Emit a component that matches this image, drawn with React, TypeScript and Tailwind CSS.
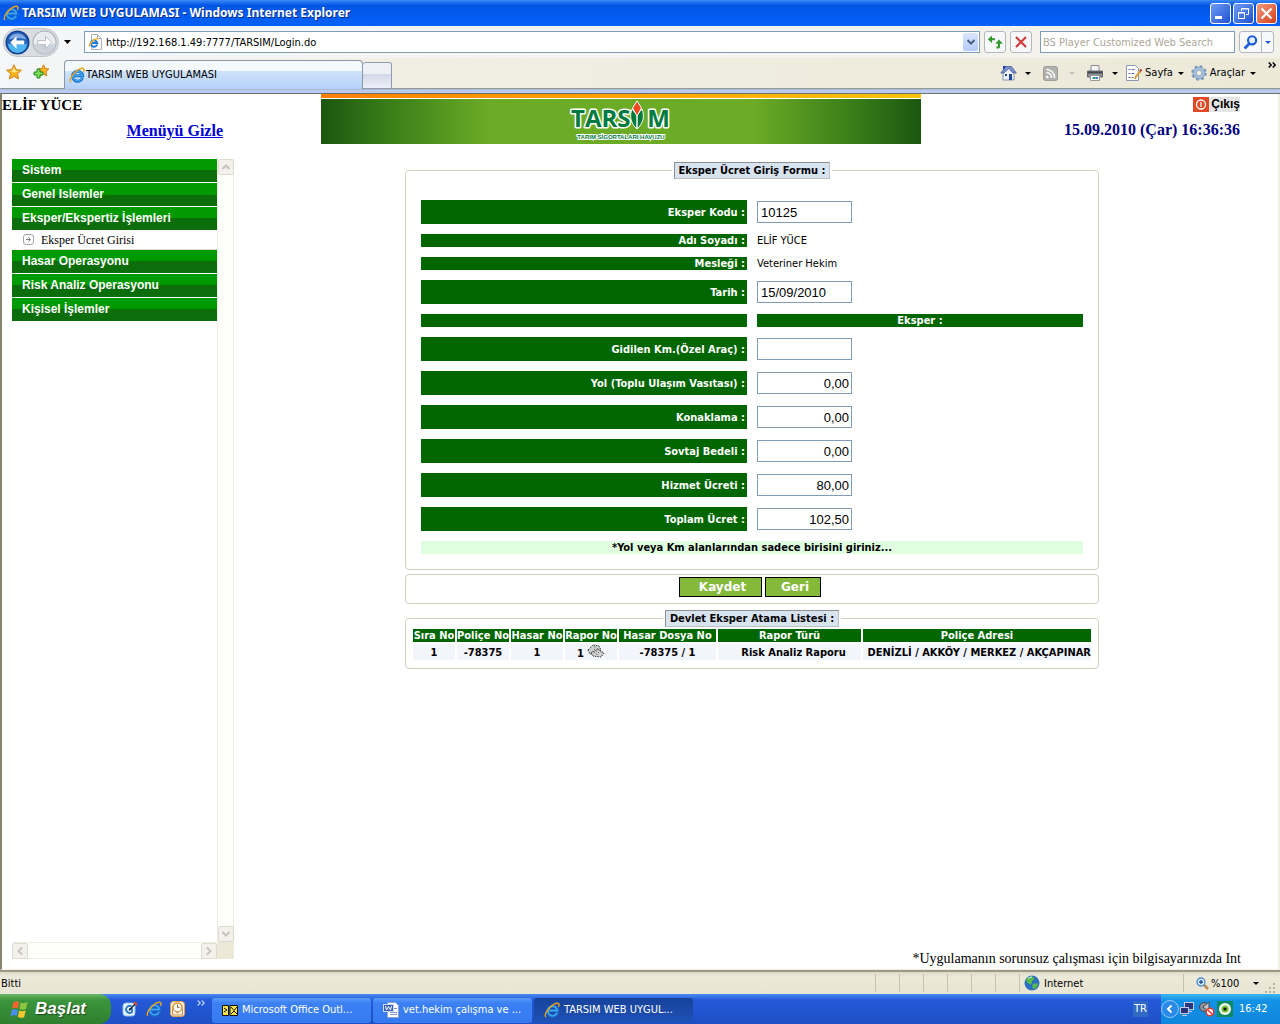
import type { ReactNode } from "react";

const menuBefore = ["Sistem", "Genel Islemler", "Eksper/Ekspertiz İşlemleri"];
const menuAfter = ["Hasar Operasyonu", "Risk Analiz Operasyonu", "Kişisel İşlemler"];

const fees = [
  { id: "km", label: "Gidilen Km.(Özel Araç) :", value: "" },
  { id: "yol", label: "Yol (Toplu Ulaşım Vasıtası) :", value: "0,00" },
  { id: "konaklama", label: "Konaklama :", value: "0,00" },
  { id: "sovtaj", label: "Sovtaj Bedeli :", value: "0,00" },
  { id: "hizmet", label: "Hizmet Ücreti :", value: "80,00" },
  { id: "toplam", label: "Toplam Ücret :", value: "102,50" },
];

function IeIcon({ className }: { className: string }) {
  return (
    <svg className={className} viewBox="0 0 16 16" fill="none">
      <path d="M13.400 10.800A5 5 0 1 1 13.600 8.700H5" stroke="#1c6fc9" strokeWidth="3" />
      <path d="M13 10.800A4.700 4.700 0 1 1 13.300 8.600H5" stroke="#3fa9f5" strokeWidth="1.500" />
      <path
        d="M2 15C-.5 13 4 6 9 2.800c3-1.800 5.500-2 6-.5.2.9-.1 1.700-.6 2.500"
        stroke="#e9a31f"
        strokeWidth="1.400"
      />
    </svg>
  );
}

function Caret({ color = "text-black" }: { color?: string }) {
  return (
    <svg className={`w-[6px] h-[3px] shrink-0 ${color}`} viewBox="0 0 6 3" fill="currentColor">
      <path d="M0 0h6L3 3z" />
    </svg>
  );
}

function Chevron({ className }: { className: string }) {
  return (
    <svg className={className} viewBox="0 0 8 8" fill="none" stroke="currentColor" strokeWidth="2">
      <path d="M0.500 6L4 2.500 7.500 6" />
    </svg>
  );
}

function TitleBar() {
  return (
    <header className="h-[26px] flex items-center pl-[3px] pr-[3px] bg-linear-to-b from-[#3b8af8] via-[#0254e3] via-20% to-[#0462fb]">
      <IeIcon className="w-4 h-4" />
      <h1 className="ml-[3px] flex-1 font-['Noto_Sans'] text-[12px] leading-5 font-bold text-white text-shadow-[1px_1px_0_#0a2d86]">
        TARSIM WEB UYGULAMASI - Windows Internet Explorer
      </h1>
      <div className="flex gap-[2px]">
        <button
          aria-label="Simge durumuna küçült"
          className="w-[21px] h-[21px] rounded-[3px] border border-white bg-linear-to-br from-[#6f9bf5] to-[#1f50cf]"
        >
          <svg className="w-full h-full" viewBox="0 0 19 19">
            <path d="M4 12h7v3H4z" fill="#fff" />
          </svg>
        </button>
        <button
          aria-label="Geri yükle"
          className="w-[21px] h-[21px] rounded-[3px] border border-white bg-linear-to-br from-[#6f9bf5] to-[#1f50cf]"
        >
          <svg className="w-full h-full" viewBox="0 0 19 19" fill="none" stroke="#fff">
            <path d="M7.500 7V4.500h7v6H12M7 5h8" />
            <path d="M4.500 8.500h6v6h-6zM4 9h7" />
          </svg>
        </button>
        <button
          aria-label="Kapat"
          className="w-[21px] h-[21px] rounded-[3px] border border-white bg-linear-to-br from-[#f09a7c] to-[#d53a10]"
        >
          <svg className="w-full h-full" viewBox="0 0 19 19" stroke="#fff" strokeWidth="2.200">
            <path d="M4.500 4.500l10 10M14.500 4.500l-10 10" />
          </svg>
        </button>
      </div>
    </header>
  );
}

function AddressBar() {
  return (
    <div className="h-8 flex items-center pl-[3px] pr-[6px] bg-linear-to-r from-[#f4f6f8] to-[#f3f2e9]">
      <div className="flex gap-[2px] rounded-full border border-[#c3c5c9] bg-[#d9dce0] p-px">
        <button aria-label="Geri">
          <svg className="w-[25px] h-[25px]" viewBox="0 0 26 26">
            <circle cx="13" cy="13" r="12.500" fill="#17408f" />
            <circle cx="13" cy="13" r="11" fill="#2463bd" />
            <path d="M3 14a10 10 0 0 0 20 0c-5 2-14 2-20 0z" fill="#4fb4f2" />
            <path d="M4 10a9.500 9.500 0 0 1 18 0c-5-2-13-2-18 0z" fill="#7fa9e0" />
            <path d="M12 6.500L5.500 13l6.500 6.500v-4.500h8v-4h-8z" fill="#fff" />
          </svg>
        </button>
        <button aria-label="İleri">
          <svg className="w-[25px] h-[25px]" viewBox="0 0 26 26">
            <circle cx="13" cy="13" r="12.500" fill="#a6abb3" />
            <circle cx="13" cy="13" r="11.500" fill="#e9ecf0" />
            <path d="M2 14a11 11 0 0 0 22 0c-6 2-15 2-22 0z" fill="#cbd2da" />
            <path d="M14 6.500l6.500 6.500-6.500 6.500v-4.500H6v-4h8z" fill="#fff" stroke="#b5bac2" />
          </svg>
        </button>
      </div>
      <button aria-label="Son sayfalar" className="w-[25px] pl-[3px] flex justify-start">
        <svg className="w-[7px] h-1 ml-[2px]" viewBox="0 0 7 4">
          <path d="M0 0h7L3.500 4z" />
        </svg>
      </button>
      <div className="flex-1 h-[22px] flex items-center border border-[#7f9db9] bg-white pl-[3px] pr-px">
        <svg className="w-[14px] h-4 shrink-0" viewBox="0 0 14 16" fill="none">
          <path d="M3.500.500h6l4 4v11h-10z" fill="#fff" stroke="#b2b2b2" />
          <path d="M9.500.500v4h4" stroke="#b2b2b2" />
          <path d="M9 10.500A3.200 3.200 0 1 1 9.100 9H4" stroke="#1c7be0" strokeWidth="2" />
          <path d="M1.500 12.500C1 10 6 4.500 10 4.500" stroke="#f3b229" strokeWidth="1.300" />
        </svg>
        <input
          aria-label="Adres"
          defaultValue="http://192.168.1.49:7777/TARSIM/Login.do"
          className="flex-1 ml-1 pt-px text-[11px] leading-4 outline-none"
        />
        <button
          aria-label="Adres listesi"
          className="w-[15px] h-[18px] rounded-[2px] bg-linear-to-b from-[#dbe6fd] to-[#b3cbf8] text-[#4d6185] flex items-center justify-center"
        >
          <Chevron className="w-2 h-2 rotate-180" />
        </button>
      </div>
      <button aria-label="Yenile" className="ml-1 w-[22px] h-[22px] rounded-[3px] border border-[#b4b8c0] bg-[#f7f8fa] p-[2px]">
        <svg viewBox="0 0 16 16" fill="#2f9a2a">
          <path d="M5 1.500v2.800h3v2H5V9L.8 5.300z" />
          <path d="M12 5.500l3.800 4.300H13V13c0 1-1 1.500-3.500 1.500v-2c1 0 1.500-.2 1.500-1V9.800H8.300z" />
        </svg>
      </button>
      <button aria-label="Durdur" className="ml-1 w-[22px] h-[22px] rounded-[3px] border border-[#b4b8c0] bg-[#f7f8fa] p-[3px]">
        <svg viewBox="0 0 14 14" stroke="#cf3a3a" strokeWidth="2.200">
          <path d="M2 2l10 10M12 2L2 12" />
        </svg>
      </button>
      <input
        aria-label="Ara"
        placeholder="BS Player Customized Web Search"
        className="ml-2 w-[195px] h-[22px] border border-[#7f9db9] bg-white px-[2px] pt-px text-[11px] placeholder:text-[#aca899] outline-none"
      />
      <div className="ml-1 h-[22px] flex rounded-[3px] border border-[#b4b8c0] bg-[#f7f8fa]">
        <button aria-label="Aramayı başlat" className="w-[21px] p-[3px]">
          <svg viewBox="0 0 14 14" fill="none" stroke="#1d5fd6" strokeWidth="2">
            <circle cx="8.500" cy="5" r="3.800" fill="#e4f0ff" />
            <path d="M6 8L1.500 12.500" strokeWidth="2.600" />
          </svg>
        </button>
        <button aria-label="Arama seçenekleri" className="w-3 flex items-center justify-center border-l border-[#b4b8c0]">
          <Caret color="text-[#1d5fd6]" />
        </button>
      </div>
    </div>
  );
}

function TabRow() {
  return (
    <div className="h-[31px] flex items-end bg-linear-to-r from-[#f4f6f8] via-[#f1efe4] via-30% to-[#ece9d8]">
      <div className="w-16 h-full flex items-center gap-[11px] pl-[6px] pb-[2px] border-b border-[#919b9c]">
        <button aria-label="Sık Kullanılanlar">
          <svg className="w-4 h-4" viewBox="0 0 16 16">
            <path
              d="M8 .8l2.200 4.800 5.200.6-3.900 3.500 1.100 5.300L8 12.400 3.400 15l1.100-5.300L.6 6.200l5.200-.6z"
              fill="#fbb41e"
              stroke="#d0801c"
            />
            <path d="M8 3l1.500 3.700 3.500.4-4 1.400-5.500-1.400 3-.4z" fill="#ffe88f" />
          </svg>
        </button>
        <button aria-label="Sık Kullanılanlara Ekle">
          <svg className="w-4 h-4" viewBox="0 0 16 16">
            <path
              d="M10.500.800l1.600 3.700 3.800.5-2.900 2.800.9 4.200-3.400-2.100-3.400 2.100.9-4.200L5 5l3.900-.5z"
              fill="#fbb41e"
              stroke="#d0801c"
            />
            <path d="M4 5h3v3h3v3H7v3H4v-3H1V8h3z" fill="#7fdc5a" stroke="#1f8a1f" />
          </svg>
        </button>
      </div>
      <div className="w-[299px] h-[29px] flex items-center rounded-t-[4px] border border-b-0 border-[#8c97a8] bg-linear-to-b from-[#f4f9ff] from-35% via-[#cfe3fb] via-36% to-[#b5d0fa] pl-1">
        <IeIcon className="w-4 h-4" />
        <span className="ml-px text-[11px] leading-4">TARSIM WEB UYGULAMASI</span>
      </div>
      <button
        aria-label="Yeni Sekme"
        className="w-[29px] h-[27px] rounded-t-[3px] border border-l-0 border-[#919bb0] bg-linear-to-b from-[#eef0f6] from-45% via-[#d3d8e8] via-46% to-[#eef0f8]"
      />
      <div className="flex-1 h-full flex items-center justify-end border-b border-[#919b9c] text-[11px] leading-4">
        <button aria-label="Giriş sayfası" className="flex items-center gap-2">
          <svg className="w-[17px] h-4" viewBox="0 0 17 16">
            <path d="M3 1h3v5H3z" fill="#2a3fb5" />
            <path d="M3 8l5-5.500L14 8v7H3z" fill="#eef3fb" stroke="#8a97b0" />
            <path d="M.8 8L6 1.500h5.500L16.300 8h-3.500L9 3.200 4 8z" fill="#7d93cc" stroke="#4a5c98" strokeWidth=".8" />
            <path d="M9 9h3v6H9z" fill="#1f4796" />
            <path d="M5 9h2v2H5z" fill="#1f4796" />
          </svg>
          <Caret />
        </button>
        <button aria-label="Akışlar" className="ml-3 flex items-center gap-[11px]">
          <svg className="w-[15px] h-[15px]" viewBox="0 0 15 15" fill="none" stroke="#fff" strokeWidth="1.500">
            <rect x=".5" y=".5" width="14" height="14" rx="2" fill="#b1b1ae" stroke="#9c9c98" strokeWidth="1" />
            <path d="M3.500 6.500a5 5 0 0 1 5 5.500M3.500 3.500a8 8 0 0 1 8 8.500" />
            <circle cx="4.300" cy="11" r=".6" />
          </svg>
          <Caret color="text-[#c5c3b8]" />
        </button>
        <button aria-label="Yazdır" className="ml-3 flex items-center gap-[9px]">
          <svg className="w-4 h-4" viewBox="0 0 16 16">
            <path d="M4 .500h8v6H4z" fill="#f5f5f5" stroke="#8c8c8c" />
            <path d="M.5 6h15v6H.5z" fill="#8b8f96" stroke="#66696f" />
            <path d="M1 7.500h14" stroke="#45484d" strokeWidth="2" />
            <path d="M3.500 10.500h9v5h-9z" fill="#fff" stroke="#999" />
            <path d="M5.500 13h3" stroke="#2f9a8a" strokeWidth="2" />
            <path d="M8.500 13H11" stroke="#4a7fd6" strokeWidth="2" />
          </svg>
          <Caret />
        </button>
        <button className="ml-2 flex items-center">
          <svg className="w-4 h-4" viewBox="0 0 16 16" fill="none">
            <path d="M.5.500h9l3 3v12H.5z" fill="#fff" stroke="#8a9ab4" />
            <path d="M2.500 4.500h2m1 0h3M2.500 8.500h2m1 0h3M2.500 12.500h2m1 0h2" stroke="#5f6fa8" />
            <path d="M14.500 6L10 11.500 9 14" stroke="#d79a3b" strokeWidth="2" />
            <path d="M14 4.500l1.500 1.500" stroke="#b03c2b" strokeWidth="2" />
          </svg>
          <span className="ml-[3px] mr-[5px]">Sayfa</span>
          <Caret />
        </button>
        <button className="ml-[7px] flex items-center">
          <svg className="w-4 h-4" viewBox="0 0 16 16" fill="none">
            <circle cx="8" cy="8" r="6.500" stroke="#7b9bbd" strokeWidth="2.600" strokeDasharray="2.600 2.500" />
            <circle cx="8" cy="8" r="4.500" stroke="#a4c0dc" strokeWidth="3" />
            <circle cx="8" cy="8" r="6" stroke="#6d8fb3" strokeWidth=".7" />
            <circle cx="8" cy="8" r="2.800" fill="#f3f1e6" stroke="#6d8fb3" strokeWidth=".7" />
          </svg>
          <span className="ml-[3px] mr-[5px]">Araçlar</span>
          <Caret />
        </button>
        <button aria-label="Diğer komutlar" className="ml-3 mr-1 mb-4">
          <svg className="w-2 h-[6px]" viewBox="0 0 8 6" fill="none" stroke="#000" strokeWidth="1.500">
            <path d="M.7.500L3.200 3 .7 5.500M4.700.500L7.200 3 4.700 5.500" />
          </svg>
        </button>
      </div>
    </div>
  );
}

function Banner() {
  return (
    <div className="w-[600px]">
      <div className="h-[4px] bg-linear-to-r from-[#ff7f00] to-[#f9c50c]" />
      <div className="mt-px h-[45px] flex justify-center bg-[linear-gradient(90deg,#1c5610,#357a18_10%,#6cab26_28%,#6cab26_72%,#357a18_90%,#1c5610)]">
        <svg className="w-[100px] h-[45px] overflow-visible" viewBox="0 0 100 45">
          <g
            fontFamily="'Open Sans','Liberation Sans',sans-serif"
            fontWeight="bold"
            fontSize="24"
            fill="#007a3d"
            stroke="#fff"
            strokeWidth="3"
            strokeLinejoin="round"
            paintOrder="stroke"
          >
            <text x="0" y="28">
              TARS
            </text>
            <text x="99" y="28" textAnchor="end">
              M
            </text>
          </g>
          <path d="M61 10c-3 7-1 15 5 20 6-5 8-13 5-20l-5 6z" fill="#007a3d" stroke="#fff" />
          <path d="M66 15v15" stroke="#fff" strokeWidth="1.500" />
          <path d="M66 2l4.500 7L66 17l-4.500-8z" fill="#f04a23" stroke="#fff" />
          <text
            x="50"
            y="40"
            textAnchor="middle"
            fontSize="6"
            fontWeight="bold"
            fontFamily="'Liberation Sans',sans-serif"
            fill="#007a3d"
            stroke="#fff"
            strokeWidth="2"
            paintOrder="stroke"
          >
            TARIM SİGORTALARI HAVUZU
          </text>
        </svg>
      </div>
    </div>
  );
}

function PageHeader() {
  return (
    <div className="flex pr-[38px] font-['Liberation_Serif'] text-[16px] leading-[18px] font-bold">
      <div className="flex-1">
        <p className="pt-[2px] text-[15px]">ELİF YÜCE</p>
        <p className="pt-2 pr-[98px] text-right">
          <a href="#" className="text-[#0000d8] underline">
            Menüyü Gizle
          </a>
        </p>
      </div>
      <Banner />
      <div className="flex-1 flex flex-col items-end">
        <button className="mt-[3px] h-[15px] flex items-center bg-[#e5e5e5] font-['Liberation_Sans'] text-[12px] leading-[15px]">
          <svg className="w-4 h-[15px] mr-[2px]" viewBox="0 0 16 15" fill="none" stroke="#fff" strokeWidth="1.300">
            <rect width="16" height="15" fill="#e04a25" stroke="none" />
            <circle cx="8" cy="7.500" r="4.500" />
            <path d="M8 5v5" />
          </svg>
          Çıkış
        </button>
        <p className="pt-[9px] text-[#000080]">15.09.2010 (Çar) 16:36:36</p>
      </div>
    </div>
  );
}

function MenuItem({ children }: { children: ReactNode }) {
  return (
    <a
      href="#"
      className="block h-6 pl-[10px] border-b border-white bg-linear-to-b from-[#009900] from-50% to-[#0b6e0b] to-50% font-['Liberation_Sans'] text-[12px] leading-[23px] font-bold text-white"
    >
      {children}
    </a>
  );
}

function ScrollButton({ label, turn }: { label: string; turn: string }) {
  return (
    <button
      aria-label={label}
      className="w-4 h-4 shrink-0 flex items-center justify-center rounded-[2px] border border-[#dddccf] bg-[#f2f1ec] text-[#c6c5bb]"
    >
      <Chevron className={`w-2 h-2 ${turn}`} />
    </button>
  );
}

function Sidebar() {
  return (
    <aside className="w-[222px] flex">
      <div className="flex-1 flex flex-col justify-between">
        <nav>
          {menuBefore.map((m) => (
            <MenuItem key={m}>{m}</MenuItem>
          ))}
          <a
            href="#"
            className="-mt-px ml-[11px] h-[20px] flex items-center gap-[7px] border-b border-[#d9d9d9] font-['Liberation_Serif'] text-[12px] leading-4"
          >
            <svg className="w-[11px] h-[11px]" viewBox="0 0 11 11" fill="none" stroke="#777">
              <rect x=".5" y=".5" width="10" height="10" rx="2.500" stroke="#a5a5a5" />
              <path d="M3 5.500h4M5.500 3.500l2 2-2 2" />
            </svg>
            Eksper Ücret Girisi
          </a>
          {menuAfter.map((m) => (
            <MenuItem key={m}>{m}</MenuItem>
          ))}
        </nav>
        <div className="h-[17px] flex justify-between border-y border-[#eeede5] bg-[#fefefb]">
          <ScrollButton label="Sola kaydır" turn="-rotate-90" />
          <ScrollButton label="Sağa kaydır" turn="rotate-90" />
        </div>
      </div>
      <div className="w-[17px] flex flex-col">
        <div className="flex-1 flex flex-col justify-between border-x border-[#eeede5] bg-[#fefefb]">
          <ScrollButton label="Yukarı kaydır" turn="rotate-0" />
          <ScrollButton label="Aşağı kaydır" turn="rotate-180" />
        </div>
        <div className="h-[17px] bg-[#ece9d8]" />
      </div>
    </aside>
  );
}

function Legend({ children }: { children: ReactNode }) {
  return (
    <legend className="mx-auto px-[2px]">
      <span className="block h-[17px] border border-[#c0c0c0] border-t-[#8f8f8f] border-l-[#8f8f8f] bg-[#d8e3f0] px-1 leading-[15px]">
        {children}
      </span>
    </legend>
  );
}

function FieldLabel({ id, children }: { id?: string; children?: ReactNode }) {
  return (
    <label htmlFor={id} className="flex items-center justify-end bg-[#006600] pr-[2px] text-white">
      {children}
    </label>
  );
}

const inputClass =
  "w-[95px] h-[22px] my-px border border-[#7f9db9] bg-white pl-[3px] pr-[2px] font-['Liberation_Sans'] text-[13px] font-normal outline-none";

function FeeForm() {
  return (
    <fieldset className="rounded-[4px] border border-[#d0d0bf] px-[15px] pb-[15px]">
      <Legend>Eksper Ücret Giriş Formu :</Legend>
      <div className="mt-[21px] grid grid-cols-2 gap-[10px]">
        <FieldLabel id="kod">Eksper Kodu :</FieldLabel>
        <input id="kod" defaultValue="10125" className={inputClass} />
        <FieldLabel>Adı Soyadı :</FieldLabel>
        <span className="font-normal">ELİF YÜCE</span>
        <FieldLabel>Mesleği :</FieldLabel>
        <span className="font-normal">Veteriner Hekim</span>
        <FieldLabel id="tarih">Tarih :</FieldLabel>
        <input id="tarih" defaultValue="15/09/2010" className={inputClass} />
        <div className="bg-[#006600]" />
        <div className="bg-[#006600] text-center text-white">Eksper :</div>
        {fees.map((f) => (
          <div key={f.id} className="col-span-2 grid grid-cols-2 gap-[10px]">
            <FieldLabel id={f.id}>{f.label}</FieldLabel>
            <input id={f.id} defaultValue={f.value} className={`${inputClass} text-right`} />
          </div>
        ))}
        <p className="col-span-2 bg-[#e0ffe0] text-center">*Yol veya Km alanlarından sadece birisini giriniz...</p>
      </div>
    </fieldset>
  );
}

function AssignmentList() {
  return (
    <fieldset className="mt-[6px] rounded-[4px] border border-[#d0d0bf] px-[5px] pb-[6px]">
      <Legend>Devlet Eksper Atama Listesi :</Legend>
      <table className="w-full table-fixed border-separate border-spacing-x-[2px] border-spacing-y-[2px] text-center whitespace-nowrap">
        <thead className="bg-[#006600] text-white">
          <tr>
            <th className="w-[42px] p-0">Sıra No</th>
            <th className="w-[52px] p-0">Poliçe No</th>
            <th className="w-[52px] p-0">Hasar No</th>
            <th className="w-[52px] p-0">Rapor No</th>
            <th className="w-[97px] p-0">Hasar Dosya No</th>
            <th className="w-[143px] p-0">Rapor Türü</th>
            <th className="p-0">Poliçe Adresi</th>
          </tr>
        </thead>
        <tbody className="bg-[#f2f5fb]">
          <tr className="h-4">
            <td className="p-0">1</td>
            <td className="p-0">-78375</td>
            <td className="p-0">1</td>
            <td className="p-0">
              <button aria-label="Raporu aç" className="flex w-full h-4 items-end justify-center gap-[3px]">
                1
                <svg className="w-[18px] h-[14px] mb-[2px]" viewBox="0 0 18 14" fill="#d0d0d0" stroke="#333" strokeDasharray="1.500 1">
                  <path d="M1 6l5-5 6 1 2 4-5 3-6 1z" />
                  <path d="M4 9l7-4 6 4-3 4-8-1z" />
                  <path d="M7 5l5 4M5 7l6 4M10 4l5 5" stroke="#777" />
                  <path d="M7 3h2" stroke="#3f9a9a" />
                </svg>
              </button>
            </td>
            <td className="p-0">-78375 / 1</td>
            <td className="p-0 pl-2">Risk Analiz Raporu</td>
            <td className="p-0 text-right">DENİZLİ / AKKÖY / MERKEZ / AKÇAPINAR</td>
          </tr>
        </tbody>
      </table>
    </fieldset>
  );
}

function StatusBar() {
  return (
    <footer className="h-[22px] flex items-stretch bg-linear-to-b from-[#dddaca] via-[#ece9d8] via-20% to-[#e8e5d5] text-[11px] leading-[23px]">
      <span className="flex-1 pl-px">Bitti</span>
      {[0, 1, 2, 3, 4, 5].map((n) => (
        <span key={n} className="w-6 my-[2px] border-l border-[#c5c2b0]" />
      ))}
      <span className="w-[164px] flex items-center border-l border-[#c5c2b0] my-[2px] pl-1">
        <svg className="w-4 h-4 mr-1" viewBox="0 0 16 16">
          <circle cx="8" cy="8" r="7.500" fill="#2c6fc4" />
          <path d="M3 3c3-2 6-2 7 0s-2 2-2 4-2 3-3 2-4-3-2-6zM9 9c2-1 5-1 5 0s-2 5-4 5-2-4-1-5z" fill="#58b947" />
          <path d="M4 3.500a6 6 0 0 1 4-1.500" stroke="#d8f0ff" fill="none" />
        </svg>
        Internet
      </span>
      <button className="w-[77px] my-[2px] flex items-center border-l border-[#c5c2b0] pl-3">
        <svg className="w-[13px] h-[13px] mr-[2px] shrink-0" viewBox="0 0 13 13" fill="none">
          <path d="M7.500 7.500l4.500 4.500" stroke="#b58a57" strokeWidth="2.500" />
          <circle cx="5" cy="5" r="4" fill="#d5eafc" stroke="#4a8cd0" strokeWidth="1.300" />
          <path d="M5 3v4M3 5h4" stroke="#1c4f9c" strokeWidth="1.300" />
        </svg>
        %100
        <span className="ml-[14px]">
          <Caret />
        </span>
      </button>
      <svg className="w-[12px] h-[12px] mx-1 self-end" viewBox="0 0 12 12" fill="#b8b4a0">
        <path d="M9 1h2v2H9zM5 5h2v2H5zM9 5h2v2H9zM1 9h2v2H1zM5 9h2v2H5zM9 9h2v2H9z" />
      </svg>
    </footer>
  );
}

function TaskButton({ icon, active, children }: { icon: ReactNode; active?: boolean; children: ReactNode }) {
  return (
    <button
      className={`w-[159px] h-[25px] flex items-center gap-1 rounded-[3px] pl-[10px] text-[11px] text-white ${
        active
          ? "bg-linear-to-b from-[#16429a] to-[#1f52b8]"
          : "bg-linear-to-b from-[#5c9bfb] via-[#3c81f3] via-20% to-[#357af0]"
      }`}
    >
      {icon}
      {children}
    </button>
  );
}

function TaskBar() {
  return (
    <div className="h-[30px] flex bg-linear-to-b from-[#4a8af2] via-[#2459d8] via-20% to-[#1f4fc4] text-[11px]">
      <button className="w-[111px] flex items-center rounded-r-[12px] bg-linear-to-b from-[#6bb76b] via-[#3c963c] via-20% to-[#2f7f2f] pl-[10px] font-['Liberation_Sans'] text-[17px] font-bold italic text-white text-shadow-[1px_1px_1px_#1c4a1c]">
        <svg className="w-[19px] h-[19px] mr-[6px]" viewBox="0 0 19 19">
          <path d="M3 3c2-2 4-2 6-1L8 8.500C6 7.500 4 7.500 2 9z" fill="#f0642d" />
          <path d="M10.500 2.500c2 1 4 1 7-.5l-1.500 7c-2 1-4 1-6.500 0z" fill="#8cc63f" />
          <path d="M1.800 10.300c2-1.500 4-1.300 6-.4L6.800 16c-2-1-4-1-6.300.5z" fill="#4a8df0" />
          <path d="M9.200 10.500c2 1 4 1 6.500 0l-1.500 6.500c-2 1.200-4 1-6.300 0z" fill="#fbc72c" />
        </svg>
        Başlat
      </button>
      <div className="w-[101px] flex items-center gap-2 pl-[11px]">
        <button aria-label="Masaüstünü Göster">
          <svg className="w-4 h-4" viewBox="0 0 16 16">
            <rect x="1" y="2" width="12" height="13" rx="3" fill="#e8f4fc" stroke="#8fc0ee" />
            <path d="M9.500 5.500a3.500 3.500 0 1 0 .5 5.500V8H7" fill="none" stroke="#2a7ac4" strokeWidth="1.800" />
            <path d="M7 9.500L13 3" stroke="#223" strokeWidth="1.400" />
            <path d="M12 1l3 3" stroke="#e0522a" strokeWidth="2" />
          </svg>
        </button>
        <button aria-label="Internet Explorer">
          <IeIcon className="w-4 h-4" />
        </button>
        <button aria-label="Outlook">
          <svg className="w-[15px] h-4" viewBox="0 0 15 16" fill="none">
            <rect x=".5" y=".5" width="14" height="15" rx="3" fill="#fff0d8" stroke="#e6a04a" />
            <circle cx="7.500" cy="6.500" r="4.500" fill="#fff" stroke="#d98a2b" strokeWidth="1.500" />
            <path d="M7.500 3.500v3h2" stroke="#8a6a3a" />
            <path d="M2.500 8l5 4 5-4v6h-10z" fill="#fff3df" stroke="#c9935a" />
          </svg>
        </button>
        <svg className="w-2 h-[6px] ml-1 mb-3" viewBox="0 0 8 6" fill="none" stroke="#bcd5ff" strokeWidth="1.200">
          <path d="M.7.500L3.200 3 .7 5.500M4.700.500L7.200 3 4.700 5.500" />
        </svg>
      </div>
      <div className="flex-1 flex items-center gap-[2px] pt-[2px]">
        <TaskButton
          icon={
            <svg className="w-4 h-[11px]" viewBox="0 0 16 11">
              <path d="M.5.500h6v10h-6zM8 .500h7.500v10H8z" fill="#f8e445" stroke="#111" />
              <path d="M2 3l3 2-3 2M9 2l3 3.500L15 2M9 9l3-3 3 3" fill="none" stroke="#111" />
            </svg>
          }
        >
          Microsoft Office Outl...
        </TaskButton>
        <TaskButton
          icon={
            <svg className="w-4 h-4" viewBox="0 0 16 16">
              <path d="M4.500.500h8l3 3v12h-11z" fill="#fff" stroke="#8ba4d6" />
              <path d="M7 10.500h7M7 12.500h7M11 6.500h3" stroke="#7d97cf" />
              <rect x=".5" y="2.500" width="10" height="7" fill="#3c5fb5" stroke="#c9d6f2" />
              <path d="M2.500 4l1 4 2-3.500 2 3.500 1-4" fill="none" stroke="#fff" />
            </svg>
          }
        >
          vet.hekim çalışma ve ...
        </TaskButton>
        <TaskButton active icon={<IeIcon className="w-4 h-4" />}>
          TARSIM WEB UYGUL...
        </TaskButton>
      </div>
      <span className="self-center mr-[13px] bg-[#316ac5] px-px leading-4 text-white">TR</span>
      <div className="w-[119px] flex items-center bg-linear-to-b from-[#3cb5f7] via-[#1293e6] via-20% to-[#0f86dd] text-white">
        <button aria-label="Gizli simgeleri göster">
          <svg className="w-[18px] h-[18px]" viewBox="0 0 18 18" fill="none">
            <circle cx="9" cy="9" r="8.500" fill="#2b8ae8" stroke="#8fcbfb" />
            <path d="M10.500 5.500L7 9l3.500 3.500" stroke="#fff" strokeWidth="2" />
          </svg>
        </button>
        <svg className="w-4 h-4" viewBox="0 0 16 16" stroke="#c5cbdc">
          <rect x="5.500" y="1.500" width="9" height="7" fill="#26357c" />
          <path d="M8 10.500h5" />
          <rect x="1.500" y="6.500" width="8" height="6" fill="#26357c" />
          <path d="M3 14.500h5" />
        </svg>
        <svg className="w-4 h-4 ml-1" viewBox="0 0 16 16" fill="none">
          <circle cx="5" cy="6" r="4.500" fill="#8a8f98" stroke="#44484f" />
          <path d="M4 6l6-5v10z" fill="#c2c6cc" stroke="#44484f" />
          <circle cx="11" cy="11" r="3.800" fill="#fff" stroke="#e03a2a" strokeWidth="1.500" />
          <path d="M8.500 8.500l5 5" stroke="#e03a2a" strokeWidth="1.500" />
        </svg>
        <svg className="w-4 h-4 ml-[2px]" viewBox="0 0 16 16">
          <rect width="16" height="16" fill="#0f8a62" />
          <circle cx="8" cy="8" r="6" fill="#f2f8ec" />
          <circle cx="8" cy="8" r="3.500" fill="#6fc12f" />
          <circle cx="8" cy="8" r="1.600" fill="#111" />
        </svg>
        <span className="ml-[6px]">16:42</span>
      </div>
    </div>
  );
}

export default function App() {
  return (
    <div className="min-h-screen flex flex-col bg-white font-['DejaVu_Sans_Condensed','Noto_Sans',sans-serif] text-black">
      <TitleBar />
      <AddressBar />
      <TabRow />
      <div className="h-[5px] border-y border-t-[#aebbd4] border-b-[#716f64] bg-[#b9cbf2]" />
      <div className="flex-1 flex flex-col border-l-2 border-l-[#85826f] border-r-2 border-r-[#f1efe2] border-b border-b-[#f1efe2]">
        <PageHeader />
        <div className="flex-1 flex pl-[10px]">
          <div className="flex pt-[15px] pb-[10px]">
            <Sidebar />
          </div>
          <main className="flex-1 flex flex-col justify-between pr-2">
            <div className="w-[694px] mx-auto pt-[18px] text-[11px] leading-[13px] font-bold">
              <FeeForm />
              <div className="mt-1 h-[30px] flex justify-center gap-[3px] rounded-[4px] border border-[#d0d0bf] pt-[2px] pr-1 text-[12px] text-white">
                <button className="w-[83px] h-5 border border-black bg-[#84b93a] pl-1 font-['DejaVu_Sans']">Kaydet</button>
                <button className="w-14 h-5 border border-black bg-[#84b93a] pl-1 font-['DejaVu_Sans']">Geri</button>
              </div>
              <AssignmentList />
            </div>
            <p className="pr-[29px] pb-px text-right font-['Liberation_Serif'] text-[14px] leading-[18px]">
              *Uygulamanın sorunsuz çalışması için bilgisayarınızda Int
            </p>
          </main>
        </div>
      </div>
      <div className="h-[2px] bg-[#9b9884]" />
      <StatusBar />
      <TaskBar />
    </div>
  );
}
